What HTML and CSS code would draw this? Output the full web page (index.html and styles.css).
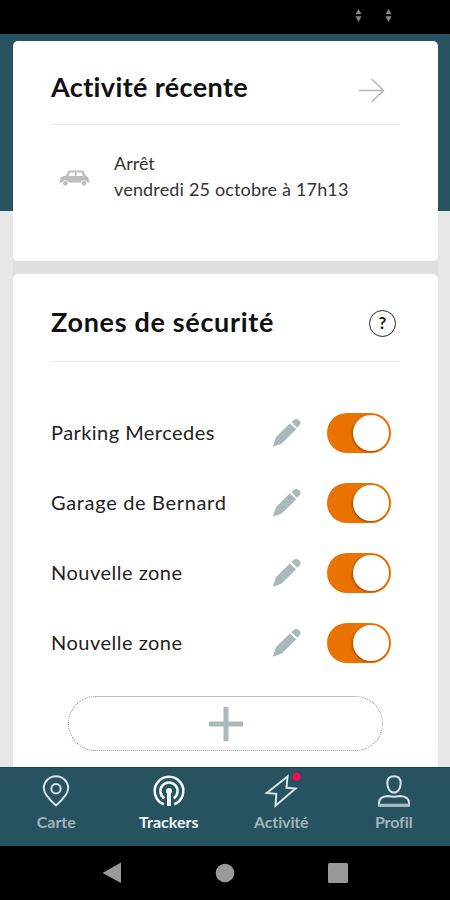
FILE: index.html
```html
<!DOCTYPE html>
<html lang="fr">
<head>
<meta charset="utf-8">
<title>Trackers</title>
<link rel="stylesheet" href="styles.css">
</head>
<body>
<svg class="defs" width="0" height="0"><symbol id="pencil" viewBox="0 0 30 30"><path d="m.8 28.800 3.200-9.800L17.800 5.400l6.400 5.800L9.500 25.800zM19.500 4l2.200-2Q24 0 26.500 1.700L28.500 3.700v2.300L25.300 9.700z"/></symbol></svg>
<div class="phone">
  <div class="status">
    <svg width="7" height="13" viewBox="0 0 7 13"><path d="M3.500 0 6.500 5H.5zM3.500 13 .5 7.200h6z"/></svg>
    <svg width="7" height="13" viewBox="0 0 7 13"><path d="M3.500 0 6.500 5H.5zM3.500 13 .5 7.200h6z"/></svg>
  </div>
  <main class="content">
    <section class="card recent">
      <header class="card-head">
        <h2 class="title-recent">Activité récente</h2>
        <svg class="arrow" width="26" height="25" viewBox="0 0 26 25"><path d="M0 12.500h24.500M12.700 1 24.500 12.500 12.700 24"/></svg>
      </header>
      <div class="event">
        <svg class="car" width="31" height="17" viewBox="0 0 31 17"><path fill-rule="evenodd" d="M8.800 1.500Q9.300.5 10.500.5h12.500q1.200 0 1.800 1l1.700 4 2 1.200q1.200.6 1.200 2v1.500l.8.4v1.800h-2.300a3.600 3.600 0 0 0-6.600 0H9.600a3.600 3.600 0 0 0-6.600 0H.5v-1.800l.6-.4V9q0-1.600 1.600-2.200l4.500-1.300zM10.800 2.500 9.500 6h6.500V2.500zm6.700 0V6h6.300l-1.300-3.500z"/><circle cx="6.300" cy="13.300" r="2.400"/><circle cx="24.900" cy="13.300" r="2.400"/></svg>
        <div class="event-text">
          <p class="kind">Arrêt</p>
          <p class="date">vendredi 25 octobre à 17h13</p>
        </div>
      </div>
    </section>
    <section class="card zones">
      <header class="card-head">
        <h2 class="title-zones">Zones de sécurité</h2>
        <span class="help">?</span>
      </header>
      <ul class="zone-list">
        <li><span class="name n1">Parking Mercedes</span><svg class="pencil" width="30" height="30"><use href="#pencil"/></svg><span class="switch"></span></li>
        <li><span class="name n2">Garage de Bernard</span><svg class="pencil" width="30" height="30"><use href="#pencil"/></svg><span class="switch"></span></li>
        <li><span class="name n3">Nouvelle zone</span><svg class="pencil" width="30" height="30"><use href="#pencil"/></svg><span class="switch"></span></li>
        <li><span class="name n3">Nouvelle zone</span><svg class="pencil" width="30" height="30"><use href="#pencil"/></svg><span class="switch"></span></li>
      </ul>
      <div class="add"><svg width="34" height="34" viewBox="0 0 34 34"><path d="M17 0v34M0 17h34"/></svg></div>
    </section>
  </main>
  <nav class="tabs">
    <a class="tab"><svg width="34" height="34" viewBox="0 0 34 34"><path d="M17 31.500Q4.800 20.800 4.800 14.300a12.200 12 0 0 1 24.400 0Q29.200 20.800 17 31.500z"/><circle cx="17" cy="14.800" r="4.700"/></svg><span class="t1">Carte</span></a>
    <a class="tab active"><svg width="34" height="34" viewBox="0 0 34 34"><path d="M11.800 30.300a14.300 14.300 0 1 1 10.400 0M12.300 24.300a8.600 8.600 0 1 1 9.400 0"/><path class="stem" d="M17 17v15"/><circle class="dot" cx="17" cy="17" r="3"/></svg><span class="t2">Trackers</span></a>
    <a class="tab"><svg width="34" height="34" viewBox="0 0 34 34"><path d="M23.500 2.500 2.800 19l9.500.8-.8 12 20-17.300-9-.7z"/><circle class="badge" cx="32.500" cy="2.800" r="4"/></svg><span class="t3">Activité</span></a>
    <a class="tab"><svg width="34" height="34" viewBox="0 0 34 34"><path d="M17 2.200q6.700 0 6.700 6.800c0 5-2.600 9.600-6.700 9.600s-6.700-4.600-6.700-9.600q0-6.800 6.700-6.800z"/><path d="M2 31.500V29q0-6.500 9-7 6 1.500 12 0 9 .5 9 7v2.500z"/><path class="base" d="M1.500 31.200h31"/></svg><span class="t4">Profil</span></a>
  </nav>
  <div class="sysbar">
    <svg width="20" height="22" viewBox="0 0 20 22"><path d="M19 .5v20.500L.5 11z"/></svg>
    <svg width="20" height="20" viewBox="0 0 20 20"><circle cx="10" cy="10" r="9.300"/></svg>
    <svg width="20" height="20" viewBox="0 0 20 20"><rect width="20" height="20" rx="1.500"/></svg>
  </div>
</div>
</body>
</html>
```
FILE: styles.css
```css
* { box-sizing: border-box; margin: 0; padding: 0; }
body { width: 450px; height: 900px; overflow: hidden; font-family: Lato, sans-serif; color: #111; font-variant-ligatures: none; }
.defs { display: block; }
.phone { display: flex; flex-direction: column; height: 900px; background: #000; }
.status { height: 34px; flex: none; display: flex; justify-content: flex-end; gap: 23px; padding: 9px 58px 0 0; }
.status svg { fill: #858585; }
.content { height: 733px; flex: none; overflow: hidden; padding: 7px 12px 0 13px; background: linear-gradient(#27525f 177px, #e7e7e7 177px); }
.card { background: #fff; border-radius: 5px; padding: 0 38px; }
.recent { height: 220px; }
.zones { margin-top: 13px; height: 510px; box-shadow: 0 -8px 0 5px #dedede; clip-path: inset(-13px 0 0 0); }
.card-head { display: flex; align-items: center; justify-content: space-between; border-bottom: 1px solid #e9e9e9; }
.recent .card-head { height: 84px; padding: 9px 15px 0 0; }
.zones .card-head { height: 88px; padding: 9px 4px 0 0; }
h2 { font-size: 27px; line-height: 34px; font-weight: 700; white-space: nowrap; }
.title-recent { letter-spacing: .38px; }
.title-zones { letter-spacing: .68px; }
.arrow { fill: none; stroke: #b5b5b5; stroke-width: 1.4; margin-top: 7px; }
.event { display: flex; padding: 25px 0 0 8px; }
.car { fill: #bdbdbd; margin: 20px 24px 0 0; }
.event-text { font-size: 18px; line-height: 26px; color: #333; white-space: nowrap; }
.date { letter-spacing: .17px; }
.help { width: 27px; height: 27px; border: 1.5px solid #222; border-radius: 50%; text-align: center; font-size: 17px; line-height: 24px; font-weight: 700; margin-top: 3px; }
.zone-list { list-style: none; padding-top: 36px; }
.zone-list li { display: flex; align-items: center; height: 70px; padding-right: 9px; }
.name { flex: 1; font-size: 20px; line-height: 24px; padding-bottom: 2px; color: #222; white-space: nowrap; }
.n1 { letter-spacing: .45px; }
.n2 { letter-spacing: .67px; }
.n3 { letter-spacing: .5px; }
.pencil { fill: #a9b8ba; margin-right: 25px; }
.switch { width: 64px; height: 40px; border-radius: 20px; background: #e97200; padding: 2px; display: flex; justify-content: flex-end; }
.switch::after { content: ""; width: 36px; height: 36px; border-radius: 50%; background: #fff; box-shadow: -1px 1px 2px #a94700; }
.add { margin: 18px 17px 0; height: 55px; border: 1px dotted #888; border-radius: 27.5px; display: flex; align-items: center; justify-content: center; }
.add path { stroke: #a9b9bb; stroke-width: 5; }
.tabs { height: 79px; flex: none; display: flex; background: #27525f; border-top: 1px solid #174652; }
.tab { flex: 1; display: flex; flex-direction: column; align-items: center; padding-top: 6px; color: #9fb4bd; font-size: 16px; line-height: 22px; font-weight: 700; }
.tab svg { fill: none; stroke: #d7e3eb; stroke-width: 2; overflow: visible; margin-bottom: 3px; }
.tab.active { color: #f2f8fb; }
.tab.active svg { stroke: #f2f8fb; stroke-width: 2.6; }
.t3 { letter-spacing: -.15px; }
.t4 { letter-spacing: -.1px; }
.tab .stem { stroke-width: 4; }
.tab .base { stroke: #a9bac2; stroke-width: 3; }
.tab .dot { fill: #f2f8fb; stroke: none; }
.tab .badge { fill: #ff0c50; stroke: none; }
.sysbar { flex: 1; display: flex; align-items: center; justify-content: space-between; padding: 0 102px; }
.sysbar svg { fill: #999; }
```
